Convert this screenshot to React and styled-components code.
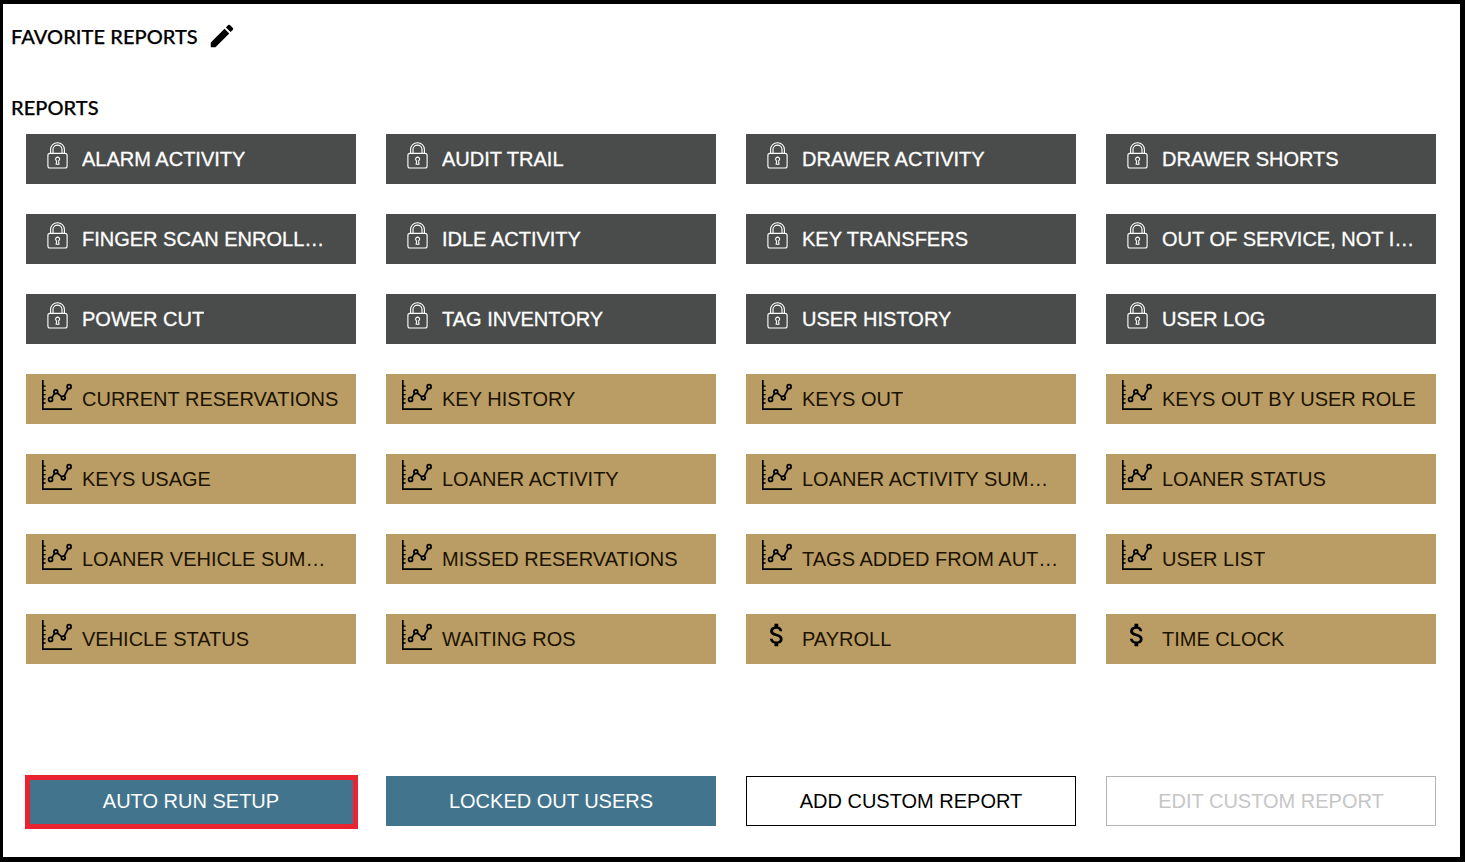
import React from 'react'
import styled, { createGlobalStyle } from 'styled-components'
import { MdEdit, MdAttachMoney } from 'react-icons/md'

const GlobalStyle = createGlobalStyle`
  * {
    box-sizing: border-box;
  }
  body {
    margin: 0;
  }
`

const Page = styled.main`
  width: 1465px;
  height: 862px;
  border: solid #000;
  border-width: 4px 5px 5px 3px;
  padding: 17px 0 0 8px;
  background: #fff;
  color: #000;
  font-family: 'Liberation Sans', Arial, sans-serif;
`

const Heading = styled.h2`
  display: flex;
  align-items: center;
  gap: 9px;
  height: 30px;
  margin: 0 0 ${({ $gap }) => $gap}px;
  font: 500 20px 'Lato', sans-serif;
  letter-spacing: 0.06px;
  -webkit-text-stroke: 0.25px #000;
`

const Grid = styled.div`
  display: grid;
  grid-template-columns: repeat(4, 330px);
  grid-auto-rows: 50px;
  gap: 30px;
  margin-left: 15px;
`

const Actions = styled(Grid)`
  margin-top: 112px;
`

const ReportButton = styled.button`
  display: flex;
  align-items: center;
  gap: 10px;
  min-width: 0;
  padding: 0 16px;
  border: 0;
  background: ${({ $locked }) => ($locked ? '#4a4c4b' : '#b99d64')};
  color: ${({ $locked }) => ($locked ? '#fff' : '#1c1200')};
  font: 20px 'Liberation Sans', Arial, sans-serif;
  -webkit-text-stroke: ${({ $locked }) => ($locked ? '0.3px #fff' : '0')};
`

const IconBox = styled.span`
  display: flex;
  flex: none;
  width: 30px;
  height: 30px;
  margin-bottom: 8px;
  color: ${({ $locked }) => ($locked ? '#fff' : '#000')};
`

const Label = styled.span`
  overflow: hidden;
  text-overflow: ellipsis;
  white-space: nowrap;
`

const ActionButton = styled.button`
  padding: 0;
  border: ${({ $outline }) => ($outline ? `1px solid ${$outline}` : '0')};
  background: ${({ $outline }) => ($outline ? '#fff' : '#42758d')};
  color: ${({ $color }) => $color};
  font: 20px 'Liberation Sans', Arial, sans-serif;
`

const HighlightedButton = styled(ActionButton)`
  margin: -1px -2px -3px -1px;
  padding: 0 1px 2px 0;
  border: 5px solid #ea2331;
`

const LockIcon = () => (
  <svg width="30" height="30" viewBox="0 0 30 30" fill="none" stroke="currentColor" strokeWidth="1.1">
    <rect x="5.9" y="13.4" width="19.2" height="14.6" rx="2" />
    <path d="M8.6 13.4V9.6a6.9 6.9 0 0 1 13.8 0v3.8M11 13.4V9.6a4.5 4.5 0 0 1 9 0v3.8" />
    <path d="M14.6 20.9a2 2 0 1 1 2 0l.4 3.4h-2.8z" />
  </svg>
)

const ChartIcon = () => (
  <svg width="30" height="30" viewBox="0 0 30 30" fill="none" stroke="currentColor" strokeWidth="1.7">
    <path d="M.8 0v29.2H30" />
    <path d="M1 6.2h2.6M1 10.4h2.6M1 14.6h2.6M1 18.8h2.6M1 23h2.6" strokeWidth="1.3" />
    <path d="M9.8 17.7l2.9-4.3M15.2 13l4.7 3.8M22.1 16.3l4.1-7.8" />
    <circle cx="8.6" cy="19.4" r="2" />
    <circle cx="13.8" cy="11.8" r="1.9" />
    <circle cx="21.3" cy="18" r="1.9" />
    <circle cx="27.1" cy="6.7" r="2" />
  </svg>
)

const icons = {
  lock: <LockIcon />,
  chart: <ChartIcon />,
  money: <MdAttachMoney size={30} />,
}

const reports = [
  ['lock', 'ALARM ACTIVITY'],
  ['lock', 'AUDIT TRAIL'],
  ['lock', 'DRAWER ACTIVITY'],
  ['lock', 'DRAWER SHORTS'],
  ['lock', 'FINGER SCAN ENROLL…'],
  ['lock', 'IDLE ACTIVITY'],
  ['lock', 'KEY TRANSFERS'],
  ['lock', 'OUT OF SERVICE, NOT I…'],
  ['lock', 'POWER CUT'],
  ['lock', 'TAG INVENTORY'],
  ['lock', 'USER HISTORY'],
  ['lock', 'USER LOG'],
  ['chart', 'CURRENT RESERVATIONS'],
  ['chart', 'KEY HISTORY'],
  ['chart', 'KEYS OUT'],
  ['chart', 'KEYS OUT BY USER ROLE'],
  ['chart', 'KEYS USAGE'],
  ['chart', 'LOANER ACTIVITY'],
  ['chart', 'LOANER ACTIVITY SUM…'],
  ['chart', 'LOANER STATUS'],
  ['chart', 'LOANER VEHICLE SUM…'],
  ['chart', 'MISSED RESERVATIONS'],
  ['chart', 'TAGS ADDED FROM AUT…'],
  ['chart', 'USER LIST'],
  ['chart', 'VEHICLE STATUS'],
  ['chart', 'WAITING ROS'],
  ['money', 'PAYROLL'],
  ['money', 'TIME CLOCK'],
]

const Report = ({ icon, name }) => {
  const locked = icon === 'lock'
  return (
    <ReportButton $locked={locked}>
      <IconBox $locked={locked}>{icons[icon]}</IconBox>
      <Label>{name}</Label>
    </ReportButton>
  )
}

const App = () => {
  return (
    <Page>
      <GlobalStyle />
      <Heading $gap={41}>
        FAVORITE REPORTS
        <MdEdit size={30} />
      </Heading>
      <Heading $gap={12}>REPORTS</Heading>
      <Grid>
        {reports.map(([icon, name]) => (
          <Report key={name} icon={icon} name={name} />
        ))}
      </Grid>
      <Actions>
        <HighlightedButton $color="#fff">AUTO RUN SETUP</HighlightedButton>
        <ActionButton $color="#fff">LOCKED OUT USERS</ActionButton>
        <ActionButton $color="#000" $outline="#000">ADD CUSTOM REPORT</ActionButton>
        <ActionButton $color="#c6c6c6" $outline="#b4b4b4">EDIT CUSTOM REPORT</ActionButton>
      </Actions>
    </Page>
  )
}

export default App
